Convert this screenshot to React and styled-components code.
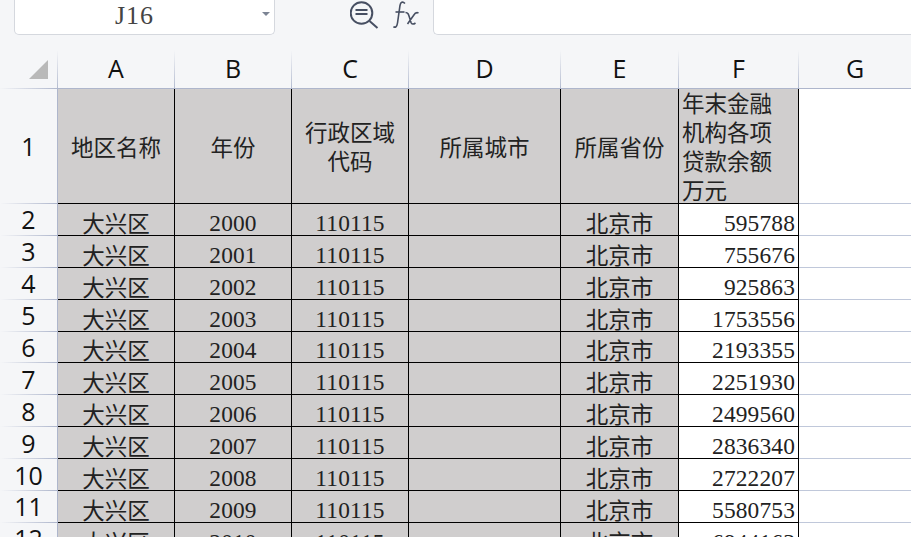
import React from 'react'
import styled, { createGlobalStyle } from 'styled-components'

const GlobalStyle = createGlobalStyle`
  html, body { margin: 0; padding: 0; background: #f5f6f8; }
  body { overflow: hidden; }
`

const cjkSerif = `"Liberation Serif", "Noto Sans CJK SC", serif`
const uiSans = `"Open Sans", "Noto Sans", sans-serif`

const Page = styled.div`
  width: 911px;
  height: 537px;
  overflow: hidden;
  display: flex;
  flex-direction: column;
  background: #f5f6f8;
`

const FormulaBar = styled.div`
  height: 50px;
  flex: none;
  display: flex;
  align-items: flex-start;
  padding-left: 14px;
`

const NameBox = styled.div`
  width: 261px;
  height: 35px;
  box-sizing: border-box;
  background: #fff;
  border: 1px solid #d5d8de;
  border-top: none;
  border-radius: 0 0 5px 5px;
  display: flex;
  align-items: center;
  justify-content: center;
  position: relative;
  font: 26px ${cjkSerif};
  letter-spacing: 1px;
  color: #444;
  padding-bottom: 3px;
  padding-right: 20px;
`

const Caret = styled.span`
  position: absolute;
  right: 4px;
  top: 12px;
  width: 0;
  height: 0;
  border-left: 4px solid transparent;
  border-right: 4px solid transparent;
  border-top: 4px solid #7c8494;
`

const Tools = styled.div`
  width: 158px;
  height: 30px;
  display: flex;
  align-items: center;
  padding-left: 75px;
  box-sizing: border-box;
  gap: 13px;
  color: #474f62;
`

const FormulaInput = styled.div`
  flex: 1;
  height: 35px;
  box-sizing: border-box;
  background: #fff;
  border-left: 1px solid #d5d8de;
  border-bottom: 1px solid #d5d8de;
  border-radius: 0 0 0 5px;
`

const Sheet = styled.div`
  display: grid;
  grid-template-columns: 58px 117px 117px 117px 152px 118px 120px 113px;
  grid-template-rows: 39px 115px;
  grid-auto-rows: 31.9px;
`

const Corner = styled.div`
  box-sizing: border-box;
  border-bottom: 1px solid;
  border-image: linear-gradient(to right, #f5f6f8, #aeb6cc) 1;
  position: relative;
  &::before {
    content: '';
    position: absolute;
    right: 0;
    top: 0;
    bottom: 0;
    width: 1px;
    background: linear-gradient(to bottom, #f5f6f8, #b4bcd0);
  }
  &::after {
    content: '';
    position: absolute;
    left: 29px;
    top: 10px;
    border-style: solid;
    border-width: 0 0 19px 19px;
    border-color: transparent transparent #b9b9b9 transparent;
  }
`

const ColHead = styled.div`
  box-sizing: border-box;
  display: flex;
  align-items: center;
  justify-content: center;
  font: 25px ${uiSans};
  color: #111;
  background: #f5f6f8;
  border-bottom: 1px solid #aeb6cc;
  position: relative;
  padding-right: 1px;
  padding-bottom: 2px;
  &::after {
    content: '';
    position: absolute;
    right: 0;
    top: 0;
    bottom: 0;
    width: 1px;
    background: linear-gradient(to bottom, #f5f6f8, #b4bcd0);
  }
`

const RowHead = styled.div`
  box-sizing: border-box;
  display: flex;
  align-items: center;
  justify-content: center;
  font: 25px ${uiSans};
  color: #111;
  border-right: 1px solid #aeb6cc;
  position: relative;
  padding-bottom: 1px;
  &::after {
    content: '';
    position: absolute;
    left: 0;
    right: 0;
    bottom: 0;
    height: 1px;
    background: linear-gradient(to right, #f5f6f8, #aeb6cc);
  }
`

const Cell = styled.div`
  box-sizing: border-box;
  background: ${p => (p.$plain ? '#fff' : '#d0cece')};
  border-right: 1px solid #000;
  border-bottom: 1px solid #000;
  font: ${p => (p.$num ? '23.4px' : '22.5px')} ${cjkSerif};
  color: #222;
  display: flex;
  align-items: ${p => (p.$head ? 'center' : 'flex-end')};
  justify-content: ${p => (p.$right ? 'flex-end' : 'center')};
  text-align: center;
  line-height: ${p => (p.$head ? '1' : p.$num ? '23px' : '21px')};
  white-space: nowrap;
  padding-right: ${p => (p.$right ? '3px' : '0')};
  letter-spacing: ${p => (p.$num ? '0.15px' : '0')};
`

const HeadText = styled.div`
  line-height: 29px;
  text-align: ${p => (p.$left ? 'left' : 'center')};
  white-space: pre-line;
  width: ${p => (p.$left ? '100%' : 'auto')};
  padding-left: ${p => (p.$left ? '3px' : '0')};
  padding-top: 4px;
`

const BlankCell = styled.div`
  box-sizing: border-box;
  background: #fff;
  border-bottom: 1px solid #c0c8da;
`

const columns = ['A', 'B', 'C', 'D', 'E', 'F', 'G']

const rows = [
  [2000, 595788],
  [2001, 755676],
  [2002, 925863],
  [2003, 1753556],
  [2004, 2193355],
  [2005, 2251930],
  [2006, 2499560],
  [2007, 2836340],
  [2008, 2722207],
  [2009, 5580753],
  [2010, 6944163],
]

const ZoomIcon = () => (
  <svg width="30" height="30" viewBox="0 0 30 30" fill="none" stroke="currentColor" strokeWidth="2">
    <circle cx="11.5" cy="13" r="10.8" />
    <path d="M5.5 10h12M5.5 14h12M19.5 21l8 7" />
  </svg>
)

const FxIcon = () => (
  <svg width="28" height="30" viewBox="0 0 28 30" fill="none" stroke="currentColor" strokeWidth="1.6">
    <path d="M12 3.5C9.5 1 7.6 2.2 7 5.5L4.5 23C3.9 27 2.2 28 0.5 26.5" />
    <path d="M2.5 12h9" />
    <path d="M12.5 12.5c2.5 0 3 1.5 4 5l1.5 5c.7 2 2.5 2 4.5.5M25.5 13c-2-1-3.2-.5-5 2.5l-6 8.5" />
  </svg>
)

export default function App() {
  return (
    <Page>
      <GlobalStyle />
      <FormulaBar>
        <NameBox>
          J16
          <Caret />
        </NameBox>
        <Tools>
          <ZoomIcon />
          <FxIcon />
        </Tools>
        <FormulaInput />
      </FormulaBar>
      <Sheet>
        <Corner />
        {columns.map(c => (
          <ColHead key={c}>{c}</ColHead>
        ))}

        <RowHead>1</RowHead>
        <Cell $head><HeadText>地区名称</HeadText></Cell>
        <Cell $head><HeadText>年份</HeadText></Cell>
        <Cell $head><HeadText>{'行政区域\n代码'}</HeadText></Cell>
        <Cell $head><HeadText>所属城市</HeadText></Cell>
        <Cell $head><HeadText>所属省份</HeadText></Cell>
        <Cell $head><HeadText $left>{'年末金融\n机构各项\n贷款余额\n万元'}</HeadText></Cell>
        <BlankCell />

        {rows.map(([year, loan], i) => (
          <React.Fragment key={year}>
            <RowHead>{i + 2}</RowHead>
            <Cell>大兴区</Cell>
            <Cell $num>{year}</Cell>
            <Cell $num>110115</Cell>
            <Cell />
            <Cell>北京市</Cell>
            <Cell $plain $right $num>{loan}</Cell>
            <BlankCell />
          </React.Fragment>
        ))}
      </Sheet>
    </Page>
  )
}
